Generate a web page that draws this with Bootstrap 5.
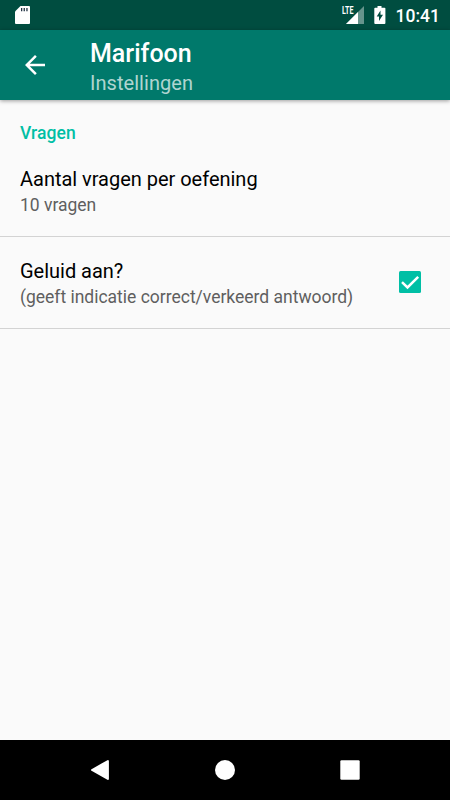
<!DOCTYPE html>
<html lang="nl">
<head>
<meta charset="utf-8">
<meta name="viewport" content="width=device-width, initial-scale=1">
<title>Marifoon – Instellingen</title>
<link href="https://cdn.jsdelivr.net/npm/bootstrap@5.3.0/dist/css/bootstrap.min.css" rel="stylesheet">
<style>
  body { font-family: Roboto, sans-serif; background: #fafafa; color: #000; }
  svg { display: block; flex: none; }
  .status-bar { height: 30px; background: #004d40; padding: 0 10px 0 15px; }
  .battery { margin-left: 9px; }
  .clock { font-size: 17.5px; line-height: 30px; font-weight: 500; margin-left: 10px; padding-top: 1px; }
  .app-bar { height: 70px; background: #00796b; box-shadow: 0 1px 4px rgba(0,0,0,.38); padding: 0 0 0 25px; }
  .app-titles { margin-left: 45px; padding-top: 9px; }
  .app-title { font-size: 25px; line-height: 30px; font-weight: 500; }
  .app-subtitle { font-size: 20px; line-height: 28px; letter-spacing: .05px; color: rgba(255,255,255,.7); }
  .pref-category { font-size: 17.5px; line-height: 24px; font-weight: 500; letter-spacing: .05px; color: #00bfa5; padding: 21px 20px 0; }
  .pref { height: 92px; border-bottom: 1px solid #d3d3d3; padding: 0 29px 0 20px; }
  .pref-text { padding-top: 2px; }
  .pref-title { font-size: 20px; line-height: 27px; letter-spacing: -.02px; }
  .pref-summary { font-size: 17.5px; line-height: 24px; letter-spacing: -.01px; color: #5f5f5f; }
  .check-box { margin-bottom: 1px; }
  .nav-keys { height: 60px; background: #000; padding: 0 37px 0 38px; }
  .nav-keys svg { width: 125px; }
</style>
</head>
<body>
<div class="d-flex flex-column vh-100 overflow-hidden">
  <div class="status-bar d-flex align-items-center text-white flex-shrink-0">
    <svg width="16" height="20" viewBox="0 0 16 20"><path fill="#fff" d="M5.500 1H14a1 1 0 0 1 1 1v16a1 1 0 0 1-1 1H1a1 1 0 0 1-1-1V6.400z"/><path fill="#234" d="M6 3h1.300v3.300H6zM8.600 3h1.300v3.300H8.600zM11.300 3h1.300v3.300h-1.300z"/></svg>
    <svg class="ms-auto" width="24" height="20" viewBox="0 0 24 20"><path fill="#fff" fill-opacity=".4" d="M23 1v18H5z"/><path fill="#004d40" d="M0 0h12.800v10H0z"/><path fill="#fff" d="M17 7V19H5z"/><text x="0.900" y="9" textLength="11.500" lengthAdjust="spacingAndGlyphs" font-family="Roboto" font-size="11" font-weight="700" fill="#fff">LTE</text></svg>
    <svg class="battery" width="12" height="20" viewBox="0 0 12 20"><path fill="#fff" fill-rule="evenodd" d="M3.500 1h4v1.700H10.500q.9 0 .9.900V18q0 .9-.9.900H1.200q-.9 0-.9-.9V3.600q0-.9.900-.9H3.500zM6.500 5.500 2.700 11.500H5v4.500L9 9.700H6.500z"/></svg>
    <span class="clock">10:41</span>
  </div>
  <header class="app-bar d-flex text-white flex-shrink-0 position-relative">
    <svg class="align-self-center" width="20" height="20" viewBox="4 4 16 16"><path fill="#fff" d="M20 11H7.830l5.590-5.590L12 4l-8 8 8 8 1.410-1.410L7.830 13H20z"/></svg>
    <div class="app-titles">
      <div class="app-title">Marifoon</div>
      <div class="app-subtitle">Instellingen</div>
    </div>
  </header>
  <main class="flex-grow-1">
    <div class="pref-category">Vragen</div>
    <div class="pref d-flex align-items-center">
      <div class="pref-text">
        <div class="pref-title">Aantal vragen per oefening</div>
        <div class="pref-summary">10 vragen</div>
      </div>
    </div>
    <div class="pref d-flex align-items-center">
      <div class="pref-text">
        <div class="pref-title">Geluid aan?</div>
        <div class="pref-summary">(geeft indicatie correct/verkeerd antwoord)</div>
      </div>
      <svg class="check-box ms-auto" width="22" height="22" viewBox="0 0 22 22"><rect width="22" height="22" rx="1.500" fill="#00bfa5"/><path fill="none" stroke="#fff" stroke-width="2.500" d="M3 11.200 8.500 16.500 19.200 5.800"/></svg>
    </div>
  </main>
  <nav class="nav-keys d-flex align-items-center flex-shrink-0">
    <svg height="24" viewBox="-62 -12 125 24"><path fill="#fff" stroke="#fff" stroke-width="2" stroke-linejoin="round" d="M-8 0 7.900-9V9z"/></svg>
    <svg height="24" viewBox="-62 -12 125 24"><circle r="10" fill="#fff"/></svg>
    <svg height="24" viewBox="-62 -12 125 24"><rect x="-9.700" y="-9.700" width="19.400" height="19.400" rx="1.200" fill="#fff"/></svg>
  </nav>
</div>
<script src="https://cdn.jsdelivr.net/npm/bootstrap@5.3.0/dist/js/bootstrap.bundle.min.js"></script>
</body>
</html>
